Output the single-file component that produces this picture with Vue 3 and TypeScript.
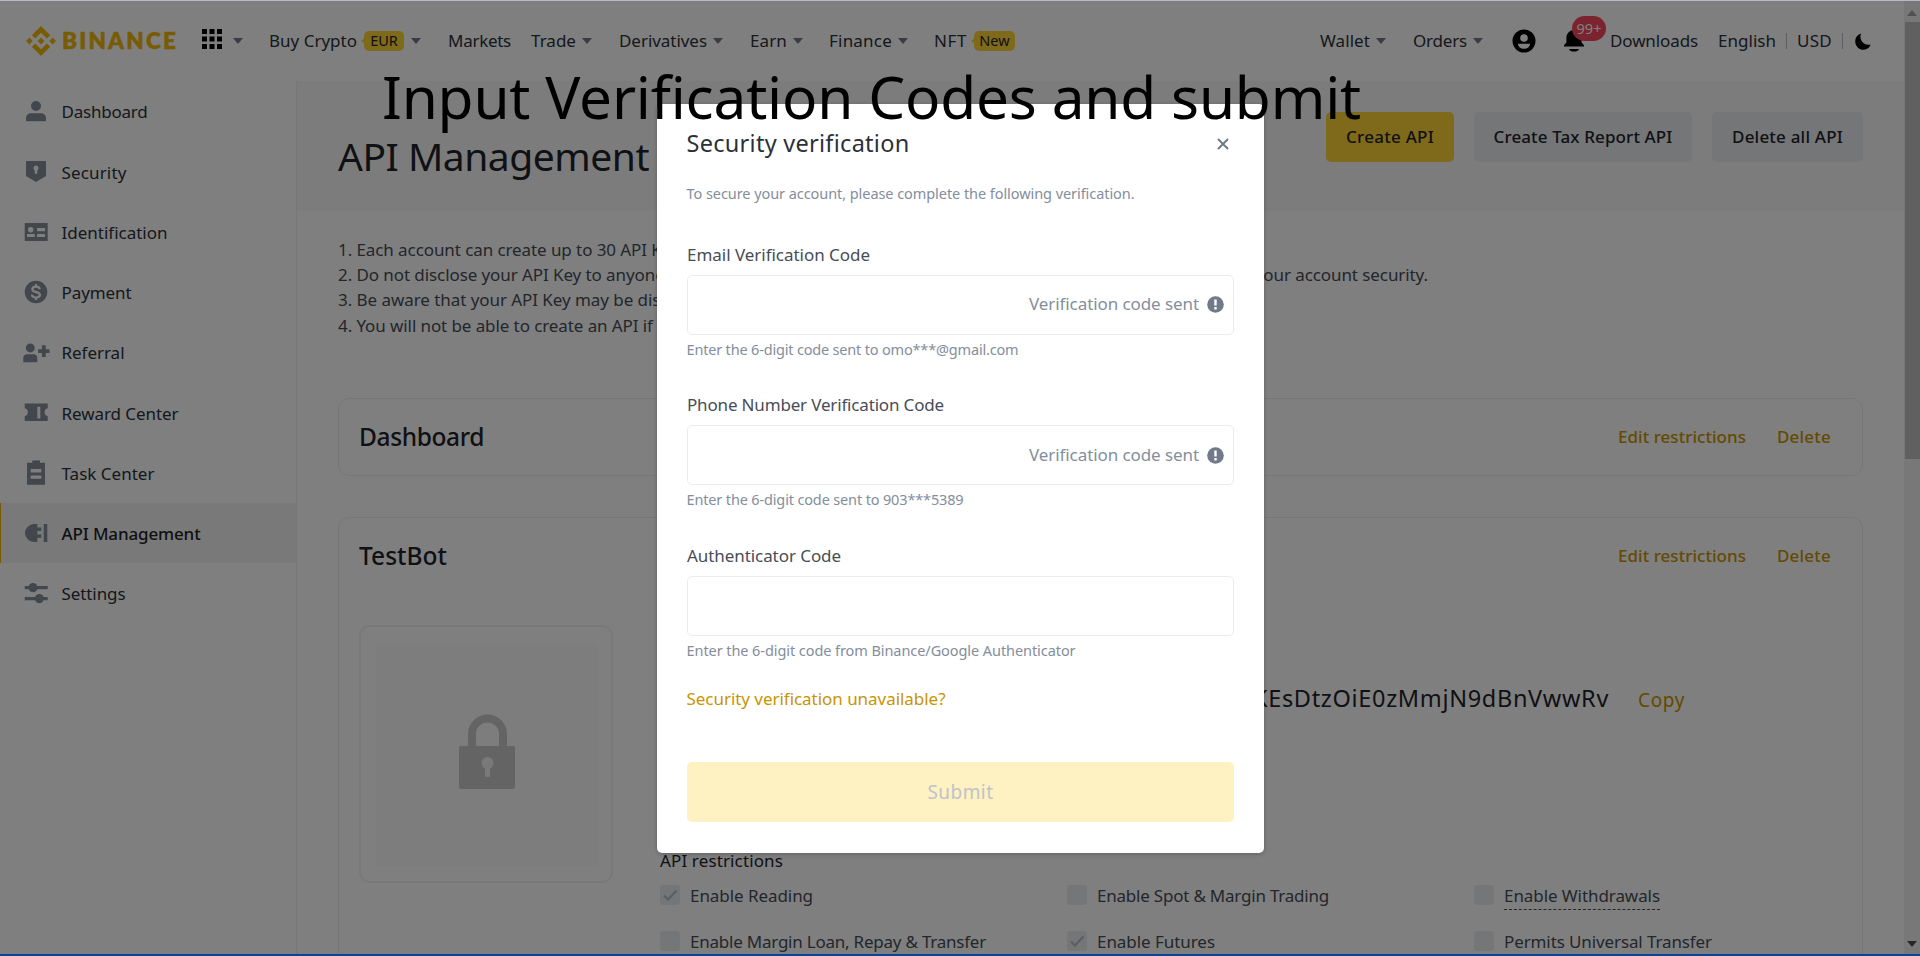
<script setup lang="ts">
import type { Directive } from 'vue'

interface NavItem { label: string; w: number; x: number; caret?: boolean; tag?: string; tagW?: number }
interface SideItem { label: string; w: number; icon: string; active?: boolean; dollar?: boolean }
interface Field { label: string; w: number; hint: string; hintW: number; sent: boolean }
interface Restriction { label: string; w: number; on?: boolean; dashed?: boolean }

// Tracks the text so that it fills the given width.
const vFit: Directive<HTMLElement, number> = {
  mounted(el, { value }) {
    const count = (el.textContent ?? '').trim().length
    const natural = el.getBoundingClientRect().width
    if (count > 0) el.style.letterSpacing = `${(value - natural) / count}px`
  },
}

const nav: NavItem[] = [
  { label: 'Buy Crypto', w: 88, x: 26, tag: 'EUR', tagW: 40, caret: true },
  { label: 'Markets', w: 63, x: 27 },
  { label: 'Trade', w: 45, x: 20, caret: true },
  { label: 'Derivatives', w: 88, x: 27, caret: true },
  { label: 'Earn', w: 37, x: 27, caret: true },
  { label: 'Finance', w: 63, x: 26, caret: true },
  { label: 'NFT', w: 33, x: 26, tag: 'New', tagW: 41 },
]

const side: SideItem[] = [
  { label: 'Dashboard', w: 86, icon: 'M14 4a5 5 0 1 1 0 10a5 5 0 0 1 0-10zM4 24.3v-3.3a4.7 4.7 0 0 1 4.7-4.7h10.6a4.7 4.7 0 0 1 4.7 4.7v3.3z' },
  { label: 'Security', w: 65, icon: 'M4 4h20v15l-10 6-10-6zM14 8.6a2.6 2.6 0 0 0-1.3 4.8v3.4h2.6v-3.4a2.6 2.6 0 0 0-1.3-4.8z' },
  { label: 'Identification', w: 106, icon: 'M2.7 5h23v18h-23zM8.7 9a2.7 2.7 0 1 0 0 5.4a2.7 2.7 0 0 0 0-5.4zM5 16.1h7.7v3H5zM15 10.1h8v3.1h-8zM15 16.1h8v3h-8z' },
  { label: 'Payment', w: 70, dollar: true, icon: 'M14 2.7a11.3 11.3 0 1 1 0 22.6a11.3 11.3 0 0 1 0-22.6z' },
  { label: 'Referral', w: 63, icon: 'M8.3 5.4a4.5 4.5 0 1 1 0 9a4.5 4.5 0 0 1 0-9zM1.3 24.2v-3.9a4 4 0 0 1 4-4h6a4 4 0 0 1 4 4v3.9zM19.9 7.3h3.8v4h3.8v3.7h-3.8v4h-3.8v-4h-3.8v-3.7h3.8z' },
  { label: 'Reward Center', w: 117, icon: 'M2.7 5.4h23v4.9a4 4 0 0 0 0 7.8v4.9h-23v-4.9a4 4 0 0 0 0-7.8zM15.3 8.8v11.6h3V8.8z' },
  { label: 'Task Center', w: 93, icon: 'M10.3 1.4h7.7v2.4h5v21.9H5V3.8h5.3zM8.7 10.1v3.3h10.6v-3.3zM8.7 16.5v3.3h10.6v-3.3z' },
  { label: 'API Management', w: 139, active: true, icon: 'M12 5h3.3v3.5h4v3.4h-4v3.5h4v3.4h-4V23H12a9 9 0 0 1 0-18zM21.7 5h3.6v18h-3.6z' },
  { label: 'Settings', w: 64, icon: 'M2.7 6.9h4.1a4.5 4.5 0 0 1 8.4 0h10.5v3.4H15.2a4.5 4.5 0 0 1-8.4 0H2.7zM2.7 17.9h10.4a4.5 4.5 0 0 1 8.4 0h4.2v3.4h-4.2a4.5 4.5 0 0 1-8.4 0H2.7z' },
]

const fields: Field[] = [
  { label: 'Email Verification Code', w: 183, hint: 'Enter the 6-digit code sent to omo***@gmail.com', hintW: 332, sent: true },
  { label: 'Phone Number Verification Code', w: 257, hint: 'Enter the 6-digit code sent to 903***5389', hintW: 277, sent: true },
  { label: 'Authenticator Code', w: 154, hint: 'Enter the 6-digit code from Binance/Google Authenticator', hintW: 389, sent: false },
]

const restrictions: Restriction[] = [
  { label: 'Enable Reading', w: 123, on: true },
  { label: 'Enable Spot & Margin Trading', w: 232 },
  { label: 'Enable Withdrawals', w: 156, dashed: true },
  { label: 'Enable Margin Loan, Repay & Transfer', w: 296 },
  { label: 'Enable Futures', w: 118, on: true },
  { label: 'Permits Universal Transfer', w: 208 },
]

const cells = Array.from({ length: 9 }, (_, i) => ({ x: (i % 3) * 7.5, y: Math.floor(i / 3) * 7.5 }))
</script>

<template>
  <div class="screen">
    <header class="top">
      <svg class="logo" viewBox="0 0 126.61 126.61"><path d="M38.73 53.2 63.31 28.62l24.6 24.6 14.3-14.31L63.31 0l-38.9 38.9zM0 63.31 14.3 49l14.31 14.31L14.3 77.61zM38.73 73.41 63.31 98l24.6-24.6 14.31 14.29-38.91 38.91L24.4 87.72zM98 63.31 112.3 49l14.31 14.3-14.31 14.32zM77.83 63.3 63.3 48.78 48.79 63.28 63.31 77.8z" /></svg>
      <span class="brand" v-fit="116">BINANCE</span>
      <svg class="apps" viewBox="0 0 20 20"><rect v-for="(c, i) in cells" :key="i" :x="c.x" :y="c.y" width="5" height="5" /></svg>
      <i class="caret first" />
      <nav class="nav">
        <div v-for="n in nav" :key="n.label" class="nav-item" :style="{ marginLeft: n.x + 'px' }">
          <span v-fit="n.w">{{ n.label }}</span>
          <span v-if="n.tag" class="tag" :style="{ width: n.tagW + 'px' }">{{ n.tag }}</span>
          <i v-if="n.caret" class="caret" />
        </div>
      </nav>
      <div class="tools">
        <span v-fit="50">Wallet</span><i class="caret" />
        <span class="orders" v-fit="54">Orders</span><i class="caret" />
        <svg class="user" viewBox="0 0 24 24"><path fill-rule="evenodd" d="M12 .5a11.5 11.5 0 1 1 0 23a11.5 11.5 0 0 1 0-23zM12 5.2a3.8 3.8 0 1 0 0 7.6a3.8 3.8 0 0 0 0-7.6zM6 14.8c0 3 2.7 5 6 5s6-2 6-5z" /></svg>
        <div class="bell">
          <svg viewBox="0 0 22 24"><path d="M11 1a7.6 7.6 0 0 1 7.6 7.6v5l2.4 2.6v1.3H1v-1.3l2.4-2.6v-5A7.6 7.6 0 0 1 11 1zM6 20h10a5.2 3.6 0 0 1-10 0z" /></svg>
          <span class="count">99+</span>
        </div>
        <span class="downloads" v-fit="88">Downloads</span>
        <span class="english" v-fit="58">English</span>
        <i class="bar" /><span class="usd" v-fit="35">USD</span><i class="bar" />
        <svg class="moon" viewBox="0 0 16 17"><path d="M6 .6C1.700 2-.2 5.600.3 9.400 1 14 4.600 16.700 8.500 16.700c3.500 0 6.200-2.100 7.100-5.200C10.500 13.200 3.400 8.500 6 .6z" /></svg>
      </div>
    </header>

    <div class="columns">
      <aside class="side">
        <div v-for="s in side" :key="s.label" class="side-item" :class="{ active: s.active }">
          <svg viewBox="0 0 28 28">
            <path fill-rule="evenodd" :d="s.icon" />
            <path v-if="s.dollar" class="dollar" d="M17.900 11.200c-.4-1.900-2-2.600-3.900-2.600-2.200 0-3.700 1-3.700 2.700 0 3.900 7.600 1.700 7.600 5.500 0 1.800-1.700 2.700-3.900 2.700-2.200 0-3.900-.9-4.200-2.900M14 5.900v2.700M14 19.400v2.700" />
          </svg>
          <span v-fit="s.w">{{ s.label }}</span>
        </div>
      </aside>

      <main class="main">
        <section class="band">
          <h1 v-fit="311">API Management</h1>
          <div class="actions">
            <button class="btn primary"><span v-fit="88">Create API</span></button>
            <button class="btn tax"><span v-fit="179">Create Tax Report API</span></button>
            <button class="btn all"><span v-fit="111">Delete all API</span></button>
          </div>
        </section>

        <div class="notes">
          <p v-fit="354">1. Each account can create up to 30 API Keys.</p>
          <p v-fit="1090">2. Do not disclose your API Key to anyone to avoid asset losses. It is recommended to bind IP for API Key to increase your account security.</p>
          <p v-fit="708">3. Be aware that your API Key may be disclosed by authorizing it to a third-party platform.</p>
          <p v-fit="490">4. You will not be able to create an API if KYC is not completed.</p>
        </div>

        <section class="card small">
          <div class="card-head">
            <h2 v-fit="125">Dashboard</h2>
            <a v-fit="128">Edit restrictions</a><a class="del" v-fit="54">Delete</a>
          </div>
        </section>

        <section class="card">
          <div class="card-head">
            <h2 v-fit="88">TestBot</h2>
            <a v-fit="128">Edit restrictions</a><a class="del" v-fit="54">Delete</a>
          </div>
          <div class="card-body">
            <div class="qr">
              <div class="qr-inner">
                <svg viewBox="0 0 58 76">
                  <path class="shackle" d="M14 36V20a15.500 15.500 0 0 1 31 0v16" />
                  <rect class="lock" x="1" y="32" width="56" height="43" rx="2" />
                  <circle class="hole" cx="29.500" cy="49" r="6" />
                  <rect class="hole" x="27" y="52" width="5" height="11" rx="1" />
                </svg>
              </div>
            </div>
            <div class="detail">
              <div class="key-row">
                <span class="key" v-fit="356">KEsDtzOiE0zMmjN9dBnVwwRv</span>
                <a class="copy" v-fit="47">Copy</a>
              </div>
              <div class="sub-title"><span v-fit="123">API restrictions</span></div>
              <div class="grid">
                <div v-for="r in restrictions" :key="r.label" class="opt">
                  <span class="box"><svg v-if="r.on" viewBox="0 0 20 20"><path d="M4 10.500 8 14.500 16.500 5.500" /></svg></span>
                  <span v-fit="r.w" class="opt-label" :class="{ dashed: r.dashed }">{{ r.label }}</span>
                </div>
              </div>
            </div>
          </div>
        </section>
      </main>

      <div class="track">
        <svg class="arrow" viewBox="0 0 10 6"><path d="M0 6 5 0l5 6z" /></svg>
        <div class="thumb" />
        <svg class="arrow down" viewBox="0 0 10 6"><path d="M0 0h10L5 6z" /></svg>
      </div>
    </div>

    <div class="shade" />

    <div class="modal">
      <div class="modal-head">
        <h3 v-fit="223">Security verification</h3>
        <svg viewBox="0 0 12 12"><path d="m1 1 10 10M11 1 1 11" /></svg>
      </div>
      <p class="lead"><span v-fit="448">To secure your account, please complete the following verification.</span></p>
      <div v-for="f in fields" :key="f.label" class="field">
        <label><span v-fit="f.w">{{ f.label }}</span></label>
        <div class="input">
          <template v-if="f.sent">
            <span v-fit="170">Verification code sent</span>
            <svg viewBox="0 0 17 17"><circle cx="8.500" cy="8.500" r="8.300" /><path d="M7.300 3.500h2.400v6H7.300zM7.300 11.100h2.400v2.400H7.300z" /></svg>
          </template>
        </div>
        <div class="hint"><span v-fit="f.hintW">{{ f.hint }}</span></div>
      </div>
      <a class="help"><span v-fit="259">Security verification unavailable?</span></a>
      <button class="submit"><span v-fit="66">Submit</span></button>
    </div>

    <div class="caption"><span v-fit="979">Input Verification Codes and submit</span></div>
    <div class="edge" />
  </div>
</template>

<style>
body { margin: 0; overflow: hidden; }
</style>

<style scoped>
.screen { position: relative; width: 1920px; height: 956px; overflow: hidden; box-sizing: border-box; background: #fff; border-top: 1px solid #b8b8cc; font: 17px/24px "Noto Sans", "Liberation Sans", sans-serif; color: #1e2329; }
.screen *, .screen *::before { box-sizing: border-box; }
.screen span, .screen h1, .screen h2, .screen h3, .screen p, .screen a { white-space: nowrap; }
span { display: inline-block; }
h1, h2, h3, p { margin: 0; font-weight: 400; width: max-content; }
svg { display: block; flex: none; }
button { border: 0; padding: 0; font: inherit; color: inherit; display: flex; align-items: center; justify-content: center; }

.top { height: 80px; display: flex; align-items: center; padding-left: 26px; padding-right: 49px; }
.top span { margin-top: -1px; }
.logo { width: 30px; height: 30px; fill: #f0b90b; }
.top .brand { margin-left: 6px; margin-top: 0; font: 800 22.500px/24px Lato, sans-serif; color: #f0b90b; -webkit-text-stroke: .4px #f0b90b; }
.apps { width: 20px; height: 20px; margin-left: 24px; margin-top: -4px; }
.caret { flex: none; width: 10px; height: 6px; margin-left: 6px; background: #707a8a; clip-path: polygon(0 0, 100% 0, 50% 100%); }
.caret.first { margin-left: 11px; margin-right: 0; }
.nav, .nav-item { display: flex; align-items: center; }
.nav-item { height: 24px; }
.nav-item > span:first-child, .tools > span { color: #2b3139; }
.top .tag { position: relative; height: 20px; margin-left: 7px; margin-right: 1px; margin-top: 0; border-radius: 5px; background: #fcd535; font-size: 14.500px; line-height: 19px; text-align: center; }
.tag::before { content: ""; position: absolute; left: -3px; top: 5px; width: 7px; height: 10px; background: #fcd535; clip-path: polygon(100% 0, 100% 100%, 0 50%); }
.tools { display: flex; align-items: center; margin-left: auto; }
.orders { margin-left: 27px; }
.user { width: 24px; height: 24px; margin-left: 29px; }
.bell { position: relative; margin-left: 27px; width: 22px; height: 24px; }
.bell svg { width: 22px; height: 24px; }
.count { position: absolute; left: 9px; top: -12px; width: 34px; height: 25px; border-radius: 12.500px; background: #f6465d; color: #fff; font-size: 14.500px; line-height: 24px; text-align: center; }
.downloads { margin-left: 25px; }
.english { margin-left: 20px; }
.bar { width: 1px; height: 16px; background: #b7bdc6; margin: 0 10px; }
.bar:last-of-type { margin-right: 12px; }
.moon { width: 16px; height: 17px; }

.columns { display: flex; height: 875px; }
.side { width: 297px; flex: none; border-right: 1px solid #eee; }
.side-item { display: flex; align-items: center; height: 60.250px; padding-left: 21px; border-left: 1px solid transparent; }
.side-item svg { width: 28px; height: 28px; fill: #848e9c; }
.side-item .dollar { fill: none; stroke: #fff; stroke-width: 2.200; }
.side-item span { margin-left: 11.500px; margin-top: 2.500px; color: #2b3139; }
.side-item.active { background: #f3f3f3; border-left-color: #f0b90b; font-weight: 500; }
.side-item.active span { color: #1e2329; }

.main { flex: 1; min-width: 0; }
.band { display: flex; justify-content: space-between; height: 130px; padding: 31px 41px 0 41px; background: #f9f9f9; }
h1 { margin-top: 20px; font-size: 39px; line-height: 48px; }
.actions { display: flex; }
.btn { height: 50px; border-radius: 5px; background: #eaecef; font-weight: 500; margin-left: 20px; }
.btn.primary { width: 128px; background: #fcd535; }
.btn.tax { width: 218px; }
.btn.all { width: 151px; }
.notes { margin: 26px 0 0 41px; height: 101px; color: #474d57; line-height: 25.200px; }

.card { margin: 41px 41px 0 41px; height: 480px; border: 1px solid #eee; border-radius: 11px; padding: 21px 31px 0 20px; }
.card.small { height: 78px; margin-top: 60px; }
.card-head { display: flex; align-items: center; height: 32px; padding-top: 1px; }
.card-head h2 { font-size: 24.500px; line-height: 32px; font-weight: 500; margin-right: auto; }
a { color: #c99400; font-weight: 500; }
.del { margin-left: 31px; }
.card-body { display: flex; margin-top: 54px; }
.qr { width: 254px; height: 258px; flex: none; padding: 17px 15px; border: 2px solid #f2f2f2; border-radius: 11px; }
.qr-inner { width: 222px; height: 222px; background: #fafafa; display: flex; justify-content: center; padding-top: 70px; }
.qr-inner svg { width: 58px; height: 76px; }
.shackle { fill: none; stroke: #c8c8c8; stroke-width: 8; }
.lock { fill: #c8c8c8; }
.hole { fill: #f2f2f2; }
.detail { margin-left: 47px; padding-top: 57px; }
.key-row { display: flex; align-items: center; width: 1025px; padding-left: 593px; height: 32px; }
.key { font-size: 23.500px; line-height: 32px; }
.copy { font-size: 19px; margin-left: 29px; margin-top: 3px; font-weight: 400; }
.sub-title { margin-top: 135px; height: 34px; }
.grid { display: grid; grid-template-columns: repeat(3, 407px); row-gap: 22px; color: #474d57; }
.opt { display: flex; align-items: center; height: 24px; }
.box { width: 20px; height: 20px; margin-right: 10px; border-radius: 3px; background: #eaecef; }
.box svg { width: 20px; height: 20px; fill: none; stroke: #b7bdc6; stroke-width: 2.400; }
.opt-label { margin-top: 1px; }
.dashed { height: 26px; margin-top: 3px; border-bottom: 1px dashed #474d57; }

.track { width: 16px; flex: none; background: #f1f1f1; display: flex; flex-direction: column; align-items: center; margin-top: -80px; height: 955px; }
.arrow { width: 10px; height: 6px; margin-top: 9px; fill: #a3a3a3; }
.thumb { width: 15px; height: 437px; margin: 6px 0 auto 1px; background: #c1c1c1; }
.arrow.down { margin: 0 0 9px; fill: #505050; }

.shade { position: absolute; inset: -1px 0 0; background: rgba(0, 0, 0, .5); }

.modal { position: absolute; left: 657px; top: 102.500px; width: 607px; height: 749px; padding: 24px 30px 0; background: #fff; border-radius: 5px; box-shadow: 0 1px 4px rgba(0, 0, 0, .25); }
.modal-head { display: flex; justify-content: space-between; align-items: center; height: 30px; color: #2b3139; }
.modal-head h3 { font-size: 23.500px; line-height: 30px; margin-left: -.5px; }
.modal-head svg { width: 12px; height: 12px; margin-top: 2px; margin-right: 5px; fill: none; stroke: #707a8a; stroke-width: 2; }
.lead { margin: 25px 0 40px -.5px; height: 20px; font-size: 14.500px; line-height: 20px; color: #848e9c; }
.field { height: 150.600px; }
.field label { display: block; height: 24px; color: #474d57; }
.input { display: flex; align-items: center; justify-content: flex-end; height: 60px; margin-top: 8px; padding-right: 9px; border: 1px solid #eaecef; border-radius: 5px; color: #848e9c; }
.input span { margin-top: -1px; }
.input svg { width: 17px; height: 17px; margin-left: 8px; fill: #707a8a; }
.input svg path { fill: #fff; }
.hint { margin: 4px 0 0 -.5px; height: 20px; font-size: 14.500px; line-height: 20px; color: #848e9c; }
.help { display: block; height: 24px; margin: -7px 0 0 -.5px; font-weight: 400; }
.submit { width: 547px; height: 60px; margin-top: 51px; padding-bottom: 1px; border-radius: 5px; background: #fef1c2; color: #c0c3c9; font-size: 19px; }

.caption { position: absolute; left: 382px; top: 55px; font: 58.500px/80px "Noto Sans", sans-serif; color: #000; }
.edge { position: absolute; left: 0; right: 0; bottom: 0; height: 2px; background: #0a4595; }
</style>
